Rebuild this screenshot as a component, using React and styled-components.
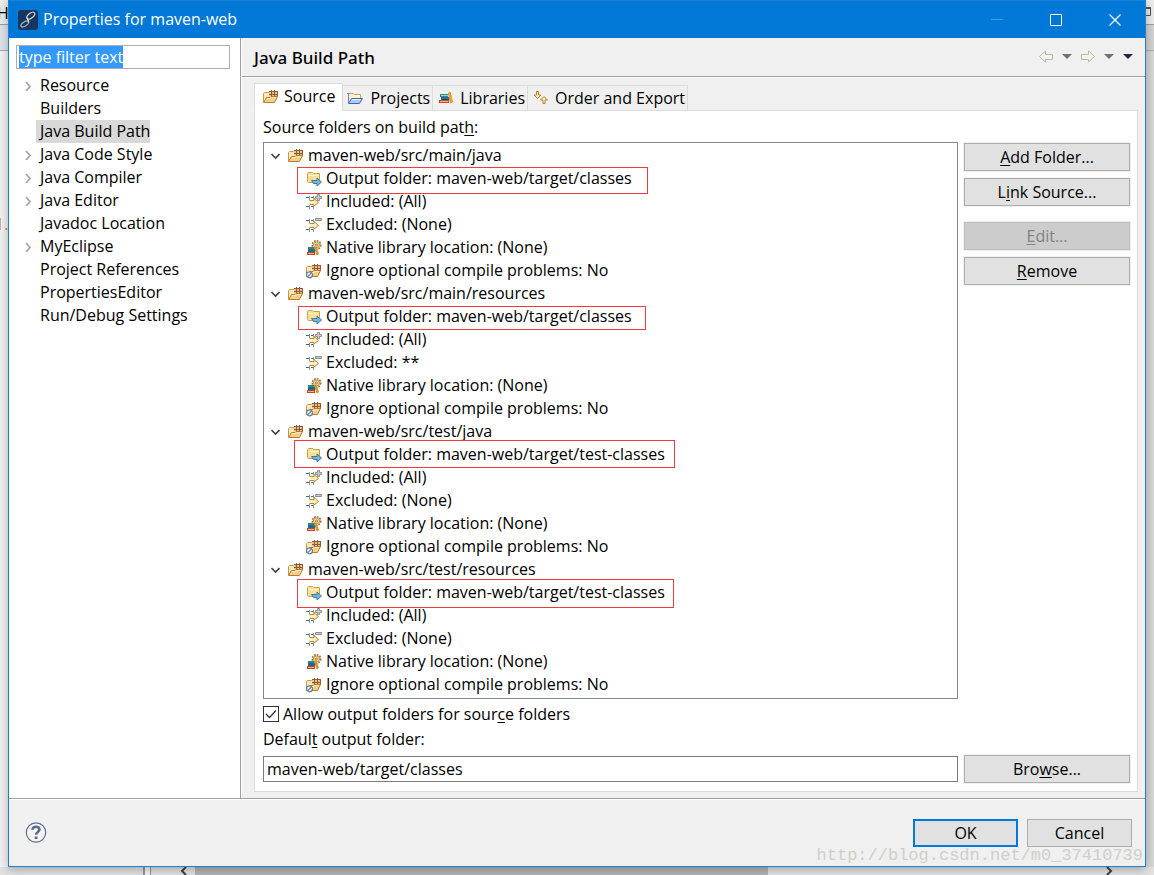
import React, { useEffect, useRef, useState } from "react"
import styled, { createGlobalStyle, css } from "styled-components"

const GlobalStyle = createGlobalStyle`
    * {
        box-sizing: border-box;
    }

    body {
        margin: 0;
        font-family: "Open Sans", "Noto Sans", sans-serif;
        font-size: 16px;
        line-height: 23px;
        color: #000;
    }

    button, input {
        font: inherit;
        color: inherit;
    }
`

/* ---------- desktop and the window behind the dialog ---------- */

const Desktop = styled.div`
    position: relative;
    display: flex;
    flex-direction: column;
    min-height: 100vh;
    padding: 0 8px 8px;
    background-color: #ececec;
    overflow: hidden;
`

const Workbench = styled.div`
    position: absolute;
    inset: 0;
    display: flex;
    flex-direction: column;
    justify-content: space-between;
    background: linear-gradient(90deg, #f4f4f4 50%, #d8d8d8 50%);
`

const WorkbenchTop = styled.div`
    display: flex;
    justify-content: space-between;
    height: 25px;
    border-bottom: 1px solid #a0a0a0;
    background-color: #ededed;
`

const WorkbenchMark = styled.span`
    margin-left: -3px;
    padding-top: 2px;
`

const WorkbenchTab = styled.div`
    height: 26px;
    margin-bottom: 162px;
    border-bottom: 1px solid #b0b0b0;
    background: linear-gradient(90deg, #dfe5ec 50%, #d4d4d4 50%);
`

const LineMark = styled.span`
    margin-left: -5px;
    color: #d08a10;
`

const WorkbenchBottom = styled.div`
    display: flex;
    align-items: flex-end;
    height: 8px;
    margin-top: auto;
    background-color: #e2e2e2;
`

const Sash = styled.div`
    flex: 0 0 8px;
    height: 8px;
    margin-left: 143px;
    border: solid #8e99a8;
    border-width: 0 1px 0 2px;
    background-color: #f4f4f4;
`

const Thumb = styled.div`
    flex: 0 1 573px;
    height: 8px;
    background-color: #b4b4b4;
`

const ScrollMark = styled.svg`
    flex: none;
    width: 8px;
    height: 8px;
    margin: 0 8px 0 ${({ $end }) => ($end ? "auto" : "28px")};
    ${({ $end }) => $end && "margin-right: 40px;"}
`

/* ---------- dialog frame ---------- */

const Dialog = styled.div`
    position: relative;
    flex: 1;
    display: flex;
    flex-direction: column;
    border: 1px solid #1a82d6;
    border-top: none;
    background-color: #f0f0f0;
    box-shadow: 0 2px 10px rgba(0, 0, 0, 0.3);
`

const TitleBar = styled.header`
    display: flex;
    align-items: center;
    height: 38px;
    padding: 0 1px 0 9px;
    border-top: 1px solid #1a82d6;
    background-color: #0078d7;
    color: #fff;
`

const Title = styled.h1`
    flex: 1;
    margin: 0 0 0 5px;
    font-size: 16px;
    font-weight: 400;
`

const CaptionButton = styled.button`
    display: flex;
    align-items: center;
    justify-content: center;
    width: 59px;
    height: 37px;
    padding: 0;
    border: none;
    background: none;
`

const Body = styled.div`
    flex: 1;
    display: flex;
    border-bottom: 1px solid #a0a0a0;
`

const Footer = styled.footer`
    display: flex;
    align-items: center;
    gap: 9px;
    height: 67px;
    padding: 0 13px 0 16px;
    border-top: 1px solid #fff;
`

const HelpButton = styled.button`
    display: flex;
    margin-right: auto;
    padding: 0;
    border: none;
    background: none;
`

const Watermark = styled.div`
    position: absolute;
    right: 2px;
    bottom: 0;
    font-family: "Liberation Mono", monospace;
    font-size: 17px;
    line-height: 21px;
    color: #cfcfcb;
    pointer-events: none;
`

/* ---------- left navigation ---------- */

const Nav = styled.nav`
    flex: none;
    width: 232px;
    padding: 7px 10px 0 7px;
    border-right: 1px solid #a0a0a0;
    background-color: #fff;
`

const FilterInput = styled.input`
    display: block;
    width: 100%;
    height: 24px;
    padding: 0 2px;
    border: 1px solid #abadb3;
    border-radius: 0;
    outline: none;
    background-color: #fff;

    &::selection {
        background-color: #3399ff;
        color: #fff;
    }
`

const NavList = styled.ul`
    margin: 5px 0 0;
    padding: 0;
    list-style: none;
`

const NavItem = styled.li`
    display: flex;
    align-items: center;
    height: 23px;
`

const NavArrow = styled.span`
    display: flex;
    justify-content: center;
    width: 20px;
    padding-left: 4px;
`

const NavLink = styled.a`
    padding: 0 0 0 4px;
    color: inherit;
    text-decoration: none;
    background-color: ${({ $selected }) => ($selected ? "#d9d9d9" : "transparent")};
`

/* ---------- page ---------- */

const Page = styled.main`
    flex: 1;
    display: flex;
    flex-direction: column;
    min-width: 0;
    border-left: 1px solid #fff;
`

const PageHeader = styled.div`
    display: flex;
    align-items: center;
    justify-content: space-between;
    height: 39px;
    padding: 0 12px;
    border-bottom: 1px solid #a0a0a0;
    box-shadow: 0 1px 0 #fff;
`

const PageTitle = styled.h2`
    margin: 0;
    font-family: "Noto Sans", sans-serif;
    font-size: 17px;
    font-weight: 500;
`

const History = styled.div`
    display: flex;
    align-items: center;
    gap: 9px;
    height: 18px;
`

const HistoryButton = styled.button`
    display: flex;
    padding: 0;
    border: none;
    background: none;
`

const PageContent = styled.div`
    flex: 1;
    display: flex;
    flex-direction: column;
    padding: 6px 7px 6px 12px;
`

const Tabs = styled.div`
    position: relative;
    display: flex;
    align-items: flex-end;
    margin-bottom: -1px;
`

const Tab = styled.button`
    display: flex;
    align-items: center;
    gap: 7px;
    height: 26px;
    padding: 0 2px 0 4px;
    border: 1px solid #dcdcdc;
    border-left: none;
    background-color: #f0f0f0;
    white-space: nowrap;

    ${({ $active }) => $active && css`
        height: 28px;
        padding: 0 7px 1px 8px;
        gap: 5px;
        border-left: 1px solid #dcdcdc;
        border-bottom-color: #fff;
        background-color: #fff;
    `}
`

const Panel = styled.section`
    flex: 1;
    display: grid;
    grid-template-columns: minmax(0, 1fr) 166px;
    grid-template-rows: 21px 1fr 22px 25px 33px;
    column-gap: 6px;
    align-items: end;
    padding: 6px 7px 8px 8px;
    border: 1px solid #dcdcdc;
    background-color: #fff;
`

const TreeLabel = styled.div`
    grid-column: 1 / -1;
    line-height: 21px;
`

const FolderTree = styled.div`
    align-self: stretch;
    margin: 4px 0;
    padding: 1px 0 2px;
    border: 1px solid #828790;
    background-color: #fff;
`

const Row = styled.div`
    display: flex;
    align-items: center;
    height: 23px;
    padding-left: ${({ $child }) => ($child ? "42px" : "6px")};
`

const Expander = styled.button`
    display: flex;
    width: 18px;
    padding: 0;
    border: none;
    background: none;
`

const RowLabel = styled.div`
    position: relative;
    display: flex;
    align-items: center;
    gap: 4px;
    white-space: nowrap;
`

// red frame laid over a row, insets are top / right / bottom / left
const Callout = styled.span`
    position: absolute;
    inset: ${({ $inset }) => $inset};
    border: 1px solid #ee3b3f;
    pointer-events: none;
`

const Actions = styled.div`
    align-self: start;
    display: flex;
    flex-direction: column;
    gap: 7px;
    padding-top: 5px;
`

const PushButton = styled.button`
    width: ${({ $dialog }) => ($dialog ? "105px" : "100%")};
    height: 28px;
    padding: 0;
    border: ${({ $primary }) => ($primary ? "2px solid #0078d7" : "1px solid #adadad")};
    background-color: #e1e1e1;
    box-shadow: 0 0 0 1px #f0f0f0;
    line-height: 24px;

    &:disabled {
        border-color: #bfbfbf;
        background-color: #cccccc;
        color: #838383;
    }
`

const Spacer = styled.div`
    height: 2px;
`

const CheckLabel = styled.label`
    grid-column: 1 / -1;
    align-self: center;
    display: flex;
    align-items: center;
    gap: 4px;
    line-height: 21px;
`

const CheckBox = styled.input`
    appearance: none;
    width: 16px;
    height: 16px;
    margin: 0;
    border: 1px solid #333;
    background: #fff;

    &:checked {
        background: url("data:image/svg+xml,%3Csvg xmlns='http://www.w3.org/2000/svg' viewBox='0 0 14 14'%3E%3Cpath d='M2 7l3.5 3.5L12 3.5' fill='none' stroke='%23333' stroke-width='1.3'/%3E%3C/svg%3E");
    }
`

const OutputLabel = styled.label`
    grid-column: 1 / -1;
    line-height: 21px;
`

const OutputInput = styled.input`
    width: 100%;
    height: 26px;
    margin-bottom: 1px;
    padding: 0 3px;
    border: 1px solid #7a7a7a;
    border-radius: 0;
    outline: none;
    background-color: #fff;
`

const Key = styled.u`
    text-underline-offset: 2px;
    text-decoration-thickness: 1px;
    text-decoration-skip-ink: none;
`

/* ---------- icons ---------- */

const StyledIcon = styled.svg`
    flex: none;
    fill: none;
`

const Icon = ({ children, size = 16 }) => (
    <StyledIcon width={size} height={size} viewBox={`0 0 ${size} ${size}`} aria-hidden="true">
        {children}
    </StyledIcon>
)

const PackageFolderShape = () => (
    <>
        <path d="M0.5 13V4.5L1.5 3.5H5.5L6.5 4.5H12.5V9" fill="#fbeab8" stroke="#c9964a" />
        <path d="M6 2.5H14.5V7.5H6Z" fill="#eebf85" />
        <path d="M6 2.5H15M6 5.5H15M8.5 1V8M11.5 1V8M14.5 2V8" stroke="#8c5a38" />
        <path d="M0.5 13.5L3.5 8.5H7L8 7.5H14.5L11.5 13.5Z" fill="#f6cf82" stroke="#b97a34" />
        <path d="M4 9.5H8L9 8.5H13" stroke="#fdeec4" />
    </>
)

const SourceIcon = () => (
    <Icon><PackageFolderShape /></Icon>
)

const ProjectsIcon = () => (
    <Icon>
        <path d="M1.5 12.5V4.5L2.5 3.5H6.5L7.5 4.5H13.5V8" fill="#fdf3cf" stroke="#c9a45a" />
        <path d="M0 3.5H2.5M1.5 3V13" stroke="#7587c0" />
        <path d="M1.5 13.5L4.5 8.5H15.5L12.5 13.5Z" fill="#a9cdf5" stroke="#4865b5" />
        <path d="M5 9.5H14" stroke="#e4f1ff" />
    </Icon>
)

const LibrariesIcon = () => (
    <Icon>
        <path d="M3 4H11V7H3Z" fill="#2f8b86" />
        <path d="M4 5.5H11" stroke="#9fd4c0" />
        <path d="M4 7H12V10H4Z" fill="#2c6f9f" />
        <path d="M5 9.5H12" stroke="#23485f" />
        <path d="M2 10H12V13H2Z" fill="#c4512c" />
        <path d="M3 11.5H11" stroke="#f1b38c" />
        <path d="M11.5 3L13 2L15.5 12L13.5 13Z" fill="#f5b431" stroke="#d98c20" />
    </Icon>
)

const OrderIcon = () => (
    <Icon>
        <path d="M4.5 1.5H6.5V5H9L5.5 8.5L2 5H4.5Z" fill="#fff3c4" stroke="#b98524" />
        <path d="M11 13.5H13V10H15.5L12 6.5L8.5 10H11Z" fill="#fff3c4" stroke="#b98524" />
    </Icon>
)

const OutputIcon = () => (
    <Icon>
        <path d="M1.5 10.5V2.5L2.5 1.5H6.5L7.5 2.5H13.5V11.5H2.5Z" fill="#fbdf97" stroke="#cfa04a" />
        <path d="M2.5 4.5H12.5" stroke="#fff5d0" />
        <path d="M5.5 9.5H11V7L15.5 11L11 15V12.5H7.5Z" fill="#79b4d6" stroke="#397c9f" />
    </Icon>
)

const FilterShape = () => (
    <>
        <path d="M3.5 2V6M7.5 2V5M3.5 11V15M7.5 12V15" stroke="#7d96ab" />
        <path d="M0 3.5H3M5 3.5H7M0 12.5H3M5 12.5H7" stroke="#46657f" />
        <path d="M3.5 6.5H8V4.5L12.5 8.5L8 12V10.5H3.5" fill="#fff0b8" stroke="#b9832f" />
    </>
)

const IncludedIcon = () => (
    <Icon>
        <FilterShape />
        <path d="M11.5 0.5H13.5V2.5H15.5V4.5H13.5V6.5H11.5V4.5H9.5V2.5H11.5Z" fill="#ccc" stroke="#8f8f8f" />
    </Icon>
)

const ExcludedIcon = () => (
    <Icon>
        <FilterShape />
        <path d="M9.5 1.5H15.5V3.5H9.5Z" fill="#ccc" stroke="#8f8f8f" />
    </Icon>
)

const NativeIcon = () => (
    <Icon>
        <circle cx="10.5" cy="5" r="4.2" stroke="#98703a" strokeWidth="1.6" strokeDasharray="1.7 1.1" />
        <circle cx="10.5" cy="5" r="3" fill="#f7e2a6" stroke="#b8904c" />
        <circle cx="10.5" cy="5" r="1" fill="#fff" stroke="#98703a" />
        <path d="M2 7H8V9H2Z" fill="#2b8a78" />
        <path d="M2 9H9V12H2Z" fill="#2c648f" />
        <path d="M1 12H9V15H1Z" fill="#bb4c2b" />
        <path d="M2 13.5H8" stroke="#f0b28c" />
        <path d="M8.5 7.5L10 7L12.5 14L11 15Z" fill="#f3ad31" stroke="#d08522" />
    </Icon>
)

const IgnoreIcon = () => (
    <Icon>
        <PackageFolderShape />
        <circle cx="3.5" cy="11.8" r="3" fill="#f4f7fa" stroke="#687d93" strokeWidth="1.2" />
        <path d="M1.5 13.8L5.5 9.8" stroke="#687d93" strokeWidth="1.2" />
    </Icon>
)

const AppIcon = () => (
    <Icon size={20}>
        <rect width="20" height="20" rx="3" fill="#17365f" />
        <ellipse cx="12.8" cy="5.6" rx="4.6" ry="2.4" transform="rotate(-38 12.8 5.6)" stroke="#cfd6de" strokeWidth="1.2" />
        <ellipse cx="6.8" cy="14" rx="4.4" ry="2" transform="rotate(-32 6.8 14)" stroke="#a9b5c3" strokeWidth="1.2" />
        <path d="M9 7.5C9 10 11.5 10 10.5 12.5" stroke="#dfe5ec" strokeWidth="1.2" />
    </Icon>
)

const HelpIcon = () => (
    <Icon size={22}>
        <circle cx="11" cy="10.5" r="9.7" fill="#f4f4f4" stroke="#5d6f8f" strokeWidth="1.2" />
        <path d="M7.5 7.8C7.5 3.7 14.5 3.7 14.5 7.6C14.5 10.1 11.1 9.9 11.1 12.7" stroke="#5a6b90" strokeWidth="2.6" />
        <path d="M9.7 14.5H12.5V17H9.7Z" fill="#5a6b90" />
    </Icon>
)

const BackIcon = () => (
    <Icon size={14}>
        <path d="M0.5 6.5L6.5 1V4.5H13.5V9.5H6.5V12Z" fill="#f5f4ec" stroke="#b9b9b0" />
    </Icon>
)

const ForwardIcon = () => (
    <Icon size={14}>
        <path d="M13.5 6.5L7.5 1V4.5H0.5V9.5H7.5V12Z" fill="#f5f4ec" stroke="#b9b9b0" />
    </Icon>
)

const DropIcon = ({ color }) => (
    <Icon size={10}>
        <path d="M0 2H10L5 7Z" fill={color} />
    </Icon>
)

const ChevronRight = () => (
    <Icon size={10}>
        <path d="M3 1L7 5.5L3 10" stroke="#a6a6a6" strokeWidth="1.8" />
    </Icon>
)

const ChevronDown = () => (
    <Icon size={10}>
        <path d="M1.5 3L5.5 7L9.5 3" stroke="#404040" strokeWidth="1.6" />
    </Icon>
)

/* ---------- data ---------- */

const navItems = [
    { name: "Resource", hasChildren: true },
    { name: "Builders" },
    { name: "Java Build Path" },
    { name: "Java Code Style", hasChildren: true },
    { name: "Java Compiler", hasChildren: true },
    { name: "Java Editor", hasChildren: true },
    { name: "Javadoc Location" },
    { name: "MyEclipse", hasChildren: true },
    { name: "Project References" },
    { name: "PropertiesEditor" },
    { name: "Run/Debug Settings" },
]

const tabs = [
    { name: "Source", icon: <SourceIcon /> },
    { name: "Projects", icon: <ProjectsIcon /> },
    { name: "Libraries", icon: <LibrariesIcon /> },
    { name: "Order and Export", icon: <OrderIcon /> },
]

const folders = [
    { path: "maven-web/src/main/java", output: "maven-web/target/classes", excluded: "(None)", inset: "0 -16px -4px -9px" },
    { path: "maven-web/src/main/resources", output: "maven-web/target/classes", excluded: "**", inset: "1px -14px -2px -8px" },
    { path: "maven-web/src/test/java", output: "maven-web/target/test-classes", excluded: "(None)", inset: "-3px -10px -2px -12px" },
    { path: "maven-web/src/test/resources", output: "maven-web/target/test-classes", excluded: "(None)", inset: "-2px -9px -4px -9px" },
]

/* ---------- components ---------- */

const Navigation = () => {
    const filterRef = useRef(null)
    const [selected, setSelected] = useState("Java Build Path")

    useEffect(() => {
        filterRef.current.focus()
        filterRef.current.select()
    }, [])

    return (
        <Nav>
            <FilterInput ref={filterRef} aria-label="Filter" defaultValue="type filter text" spellCheck={false} />
            <NavList>
                {navItems.map(({ name, hasChildren }) => (
                    <NavItem key={name}>
                        <NavArrow>{hasChildren && <ChevronRight />}</NavArrow>
                        <NavLink href="#" $selected={name === selected} onClick={() => setSelected(name)}>
                            {name}
                        </NavLink>
                    </NavItem>
                ))}
            </NavList>
        </Nav>
    )
}

const SourceFolder = ({ folder }) => {
    const [open, setOpen] = useState(true)

    return (
        <>
            <Row>
                <Expander aria-label={folder.path} aria-expanded={open} onClick={() => setOpen(!open)}>
                    <ChevronDown />
                </Expander>
                <RowLabel><SourceIcon />{folder.path}</RowLabel>
            </Row>

            {open && (
                <>
                    <Row $child>
                        <RowLabel>
                            <OutputIcon />Output folder: {folder.output}
                            <Callout $inset={folder.inset} />
                        </RowLabel>
                    </Row>
                    <Row $child><RowLabel><IncludedIcon />Included: (All)</RowLabel></Row>
                    <Row $child><RowLabel><ExcludedIcon />Excluded: {folder.excluded}</RowLabel></Row>
                    <Row $child><RowLabel><NativeIcon />Native library location: (None)</RowLabel></Row>
                    <Row $child><RowLabel><IgnoreIcon />Ignore optional compile problems: No</RowLabel></Row>
                </>
            )}
        </>
    )
}

const SourcePanel = () => (
    <Panel>
        <TreeLabel>Source folders on build pat<Key>h</Key>:</TreeLabel>

        <FolderTree>
            {folders.map((folder) => <SourceFolder key={folder.path} folder={folder} />)}
        </FolderTree>
        <Actions>
            <PushButton><Key>A</Key>dd Folder...</PushButton>
            <PushButton>L<Key>i</Key>nk Source...</PushButton>
            <Spacer />
            <PushButton disabled><Key>E</Key>dit...</PushButton>
            <PushButton><Key>R</Key>emove</PushButton>
        </Actions>

        <CheckLabel>
            <CheckBox type="checkbox" defaultChecked />
            <span>Allow output folders for sour<Key>c</Key>e folders</span>
        </CheckLabel>

        <OutputLabel htmlFor="output">Defaul<Key>t</Key> output folder:</OutputLabel>

        <OutputInput id="output" defaultValue="maven-web/target/classes" spellCheck={false} />
        <PushButton>Bro<Key>w</Key>se...</PushButton>
    </Panel>
)

const App = () => {
    const [activeTab, setActiveTab] = useState("Source")

    return (
        <Desktop>
            <GlobalStyle />

            <Workbench aria-hidden="true">
                <WorkbenchTop>
                    <WorkbenchMark>H</WorkbenchMark>
                    <Icon>
                        <path d="M7.5 7.5H12.5V15.5H7.5M7 8.5H13" stroke="#555" />
                    </Icon>
                </WorkbenchTop>
                <WorkbenchTab />
                <LineMark>1.</LineMark>
                <WorkbenchBottom>
                    <Sash />
                    <ScrollMark viewBox="0 0 8 8"><path d="M7 0L3 4L7 8" fill="none" stroke="#404040" strokeWidth="2" /></ScrollMark>
                    <Thumb />
                    <ScrollMark $end viewBox="0 0 8 8"><path d="M1 0L5 4L1 8" fill="none" stroke="#404040" strokeWidth="2" /></ScrollMark>
                </WorkbenchBottom>
            </Workbench>

            <Dialog role="dialog" aria-labelledby="title">
                <TitleBar>
                    <AppIcon />
                    <Title id="title">Properties for maven-web</Title>
                    <CaptionButton aria-label="Minimize" disabled>
                        <Icon size={12}><path d="M0 5.5H12" stroke="#3d9be6" /></Icon>
                    </CaptionButton>
                    <CaptionButton aria-label="Maximize">
                        <Icon size={12}><path d="M0.5 0.5H11.5V11.5H0.5Z" stroke="#fff" /></Icon>
                    </CaptionButton>
                    <CaptionButton aria-label="Close">
                        <Icon size={12}><path d="M0.5 0.5L11.5 11.5M11.5 0.5L0.5 11.5" stroke="#fff" strokeWidth="1.2" /></Icon>
                    </CaptionButton>
                </TitleBar>

                <Body>
                    <Navigation />
                    <Page>
                        <PageHeader>
                            <PageTitle>Java Build Path</PageTitle>
                            <History>
                                <HistoryButton aria-label="Back"><BackIcon /></HistoryButton>
                                <HistoryButton aria-label="Back history"><DropIcon color="#707070" /></HistoryButton>
                                <HistoryButton aria-label="Forward"><ForwardIcon /></HistoryButton>
                                <HistoryButton aria-label="Forward history"><DropIcon color="#707070" /></HistoryButton>
                                <HistoryButton aria-label="Menu"><DropIcon color="#2a2350" /></HistoryButton>
                            </History>
                        </PageHeader>

                        <PageContent>
                            <Tabs role="tablist">
                                {tabs.map(({ name, icon }) => (
                                    <Tab
                                        key={name}
                                        role="tab"
                                        aria-selected={name === activeTab}
                                        $active={name === activeTab}
                                        onClick={() => setActiveTab(name)}
                                    >
                                        {icon}
                                        {name}
                                    </Tab>
                                ))}
                            </Tabs>
                            <SourcePanel />
                        </PageContent>
                    </Page>
                </Body>

                <Footer>
                    <HelpButton aria-label="Help"><HelpIcon /></HelpButton>
                    <PushButton $dialog $primary>OK</PushButton>
                    <PushButton $dialog>Cancel</PushButton>
                </Footer>

                <Watermark>http://blog.csdn.net/m0_37410739</Watermark>
            </Dialog>
        </Desktop>
    )
}

export default App
